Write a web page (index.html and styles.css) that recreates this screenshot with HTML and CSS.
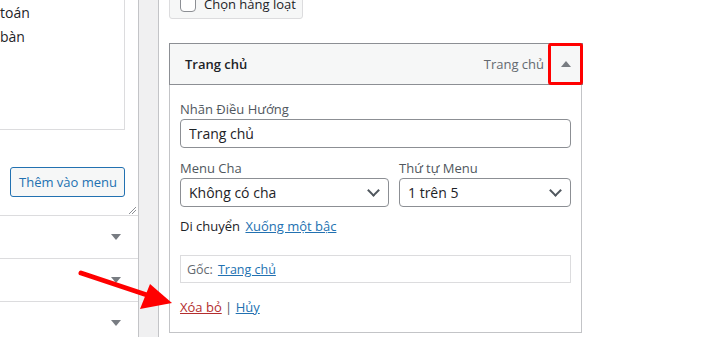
FILE: index.html
```html
<!DOCTYPE html>
<html lang="vi">
<head>
  <meta charset="UTF-8">
  <meta name="viewport" content="width=device-width, initial-scale=1">
  <title>Menu</title>
  <link rel="stylesheet" href="styles.css">
</head>
<body>

<div class="page">

  <!-- LEFT: add items -->
  <div class="side">
    <div class="checklist">
      <div class="check-item">toán</div>
      <div class="check-item">bàn</div>
    </div>
    <div class="side-actions">
      <button class="btn">Thêm vào menu</button>
    </div>
    <svg class="resize" width="8" height="8" viewBox="0 0 8 8">
      <path d="M1 8 L8 1 M4 8 L8 4" stroke="#8c8f94" stroke-width="1"/>
    </svg>
    <div class="section"><span class="caret-down"></span></div>
    <div class="section"><span class="caret-down"></span></div>
    <div class="section"><span class="caret-down"></span></div>
  </div>

  <!-- RIGHT: menu structure -->
  <div class="main">
    <div class="bulk">
      <button class="btn btn-bulk"><span class="checkbox"></span>Chọn hàng loạt</button>
    </div>

    <div class="menu-item">
      <div class="item-bar">
        <span class="item-title">Trang chủ</span>
        <span class="item-type">Trang chủ</span>
        <span class="item-toggle"><span class="caret-up"></span></span>
      </div>
      <div class="item-settings">
        <label class="field">
          <span class="field-label">Nhãn Điều Hướng</span>
          <input class="input" type="text" value="Trang chủ">
        </label>
        <div class="field-row">
          <label class="field field-parent">
            <span class="field-label">Menu Cha</span>
            <span class="select">Không có cha<span class="chev"></span></span>
          </label>
          <label class="field field-order">
            <span class="field-label">Thứ tự Menu</span>
            <span class="select">1 trên 5<span class="chev"></span></span>
          </label>
        </div>
        <div class="move">Di chuyển <a href="#">Xuống một bậc</a></div>
        <div class="original">Gốc: <a href="#">Trang chủ</a></div>
        <div class="item-actions"><a class="delete" href="#">Xóa bỏ</a> <span class="sep">|</span> <a href="#">Hủy</a></div>
      </div>
    </div>
  </div>

</div>

<!-- annotation -->
<svg class="arrow" width="721" height="337" viewBox="0 0 721 337">
  <line x1="81" y1="273" x2="150" y2="296" stroke="#f00" stroke-width="5" stroke-linecap="round"/>
  <polygon points="150,284 140,309 172,303" fill="#f00"/>
</svg>

</body>
</html>
```

FILE: styles.css
```css
body {
  margin: 0;
  background: #f0f0f1;
  font-family: "Open Sans", "Noto Sans", sans-serif;
  font-size: 13px;
  color: #1d2327;
  overflow: hidden;
}

.page {
  display: flex;
  gap: 19px;
  height: 337px;
}

a {
  color: #2271b1;
}

/* Left column */
.side {
  position: relative;
  width: 138px;
  flex: 0 0 138px;
  background: #fff;
  border-right: 1px solid #c3c4c7;
}

.checklist {
  width: 125px;
  height: 130px;
  border-right: 1px solid #dcdcde;
  border-bottom: 1px solid #dcdcde;
  box-sizing: border-box;
  padding-top: 1px;
}

.check-item {
  font-size: 14px;
  line-height: 24px;
}

.side-actions {
  display: flex;
  justify-content: flex-end;
  width: 125px;
  margin-top: 37px;
  height: 48px;
}

.btn {
  font-family: inherit;
  font-size: 13px;
  height: 30px;
  padding: 0 8px;
  border-radius: 3px;
  border: 1px solid #2271b1;
  background: #f6f7f7;
  color: #2271b1;
  white-space: nowrap;
  cursor: pointer;
}

.side-actions .btn {
  width: 115px;
}

.resize {
  position: absolute;
  left: 128px;
  top: 206px;
}

.section {
  height: 42px;
  border-top: 1px solid #dcdcde;
  display: flex;
  justify-content: flex-end;
  align-items: center;
  padding-right: 17px;
}

.caret-down {
  width: 0;
  height: 0;
  border-left: 5px solid transparent;
  border-right: 5px solid transparent;
  border-top: 6px solid #787c82;
}

/* Right column */
.main {
  flex: 1;
  background: #fff;
  border-left: 1px solid #c3c4c7;
  padding-left: 10px;
}

.bulk {
  margin-top: -12px;
  height: 55px;
}

.btn-bulk {
  display: flex;
  align-items: center;
  gap: 8px;
  height: 31px;
  width: 134px;
  padding: 0 10px;
  border-color: #dcdcde;
  color: #1d2327;
  font-size: 13px;
}

.checkbox {
  flex: 0 0 auto;
  width: 14px;
  height: 14px;
  border: 1px solid #8c8f94;
  border-radius: 4px;
  background: #fff;
}

.menu-item {
  width: 414px;
}

.item-bar {
  display: flex;
  align-items: center;
  height: 40px;
  border: 1px solid #8c8f94;
  background: #f6f7f7;
  padding-left: 15px;
}

.item-title {
  font-weight: 600;
  font-size: 13px;
  flex: 1;
}

.item-type {
  color: #646970;
  font-size: 13px;
  margin-right: 4px;
}

.item-toggle {
  box-sizing: border-box;
  width: 35px;
  height: 42px;
  margin: -1px -1px -1px 0;
  border: 3px solid #f00;
  border-radius: 3px;
  display: flex;
  justify-content: center;
  align-items: center;
}

.caret-up {
  width: 0;
  height: 0;
  border-left: 5px solid transparent;
  border-right: 5px solid transparent;
  border-bottom: 6px solid #787c82;
}

.item-settings {
  border: 1px solid #c3c4c7;
  border-top: none;
  width: 413px;
  box-sizing: border-box;
  height: 248px;
  padding: 15px 10px 0;
}

.field {
  display: block;
}

.field-label {
  display: block;
  color: #50575e;
  line-height: 19px;
}

.input,
.select {
  display: flex;
  align-items: center;
  box-sizing: border-box;
  width: 100%;
  height: 29px;
  border: 1px solid #8c8f94;
  border-radius: 4px;
  padding: 0 8px;
  font-family: inherit;
  font-size: 14px;
  color: #1d2327;
  background: #fff;
}

.field-row {
  display: flex;
  gap: 10px;
  margin-top: 11px;
}

.field-parent {
  width: 209px;
}

.field-order {
  flex: 1;
}

.select {
  justify-content: space-between;
}

.chev {
  width: 7px;
  height: 7px;
  border-right: 2px solid #50575e;
  border-bottom: 2px solid #50575e;
  transform: rotate(45deg);
  margin: -4px 2px 0 0;
}

.move {
  margin-top: 10px;
  line-height: 19px;
}

.move a {
  margin-left: 2px;
}

.original {
  margin-top: 19px;
  height: 28px;
  border: 1px solid #dcdcde;
  box-sizing: border-box;
  padding: 0 6px;
  display: flex;
  align-items: center;
  gap: 5px;
  color: #646970;
  font-size: 12.5px;
}

.item-actions {
  margin-top: 15px;
}

.delete {
  color: #b32d2e;
}

.sep {
  color: #50575e;
}

/* Annotation */
.arrow {
  position: absolute;
  left: 0;
  top: 0;
  pointer-events: none;
}
```
